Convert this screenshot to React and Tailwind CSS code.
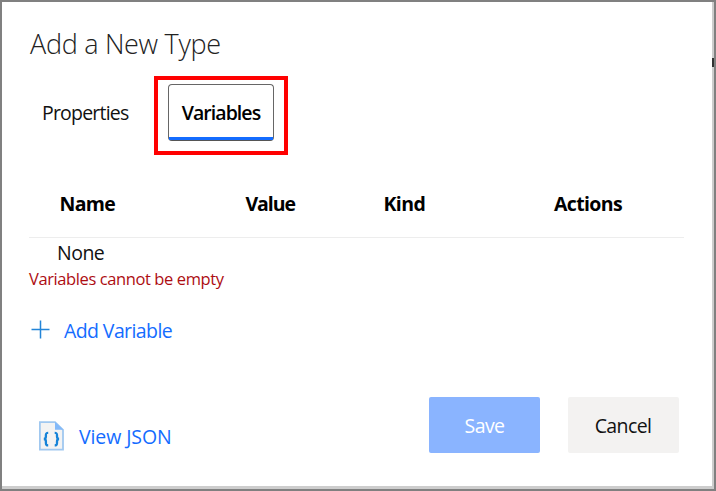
import React from "react";

const columns = [
  { label: "Name", cell: "w-[186px] pl-[30.5px] tracking-[-0.7px]" },
  { label: "Value", cell: "w-[138px] pl-[30.5px] tracking-[-1.05px]" },
  { label: "Kind", cell: "w-[170px] pl-[30.5px] tracking-[-0.6px]" },
  { label: "Actions", cell: "w-[160px] pl-[31px] tracking-[-0.65px]" },
];

function PlusIcon() {
  return (
    <svg width="19" height="19" viewBox="0 0 19 19" fill="none" className="block">
      <path d="M9.5 0.5V18.5M0.5 9.5H18.5" stroke="#2385d8" strokeWidth="1.5" />
    </svg>
  );
}

function JsonFileIcon() {
  return (
    <svg width="26" height="30" viewBox="0 0 26 30" fill="none" className="block">
      <path d="M1.9 1.2H17L25 8.8V28.6H1.9Z" fill="#f3f3f3" stroke="#a0c8f0" strokeWidth="1.8" />
      <path d="M17 0.8V8.8H25.4Z" fill="#83b9f9" />
      <path
        d="M10.2 11.8C8 11.8 7.9 12.6 7.9 14.2V15.6C7.9 17.2 7.3 18 5.8 18C7.3 18 7.9 18.8 7.9 20.4V21.9C7.9 23.6 8 24.4 10.2 24.4"
        stroke="#1683d8"
        strokeWidth="2.3"
      />
      <path
        d="M16.7 11.8C18.9 11.8 19 12.6 19 14.2V15.6C19 17.2 19.6 18 21.1 18C19.6 18 19 18.8 19 20.4V21.9C19 23.6 18.9 24.4 16.7 24.4"
        stroke="#1683d8"
        strokeWidth="2.3"
      />
    </svg>
  );
}

export default function App() {
  return (
    <div className="relative h-[491px] w-[716px] overflow-hidden border-2 border-[#808080] bg-white font-['Open_Sans','Noto_Sans',sans-serif] text-[19.5px] leading-7 text-[#111]">
      <div className="flex h-full flex-col border-r-2 border-b-3 border-[#cdcdcd] pl-[27px]">
        <h1 className="mt-6 h-9 pl-px text-[27px] leading-9 font-light tracking-[-0.3px] whitespace-nowrap text-[#222]">
          Add a New Type
        </h1>

        <div className="mt-[14px] flex h-[79px]">
          <button className="mt-[23px] h-7 w-[125px] pl-[13px] text-left tracking-[-0.8px]">Properties</button>
          <div className="h-[79px] w-[134px] border-4 border-[#ff0000] px-[10px] pt-1">
            <button className="flex h-[57px] w-[106px] flex-col rounded-[4px] border border-[#666] border-b-[#555]">
              <span className="mt-[14px] block h-[38px] w-full text-center font-semibold tracking-[-0.95px] text-black">
                Variables
              </span>
              <span className="block h-[3px] w-full shrink-0 bg-[#146cff]" />
            </button>
          </div>
        </div>

        <div className="flex h-[83px] w-[655px] border-b border-[#ededed] pt-[35px] font-bold text-black">
          {columns.map((column) => (
            <div key={column.label} className={column.cell}>
              {column.label}
            </div>
          ))}
        </div>

        <div className="mt-px h-7 pl-[28px] tracking-[-0.5px]">None</div>
        <div className="h-6 text-[16.5px] leading-6 tracking-[-0.4px] text-[#ad0d12]">Variables cannot be empty</div>

        <button className="mt-[25px] flex h-7 items-start self-start pl-[2px] text-[#146cff]">
          <span className="mt-1">
            <PlusIcon />
          </span>
          <span className="mt-px ml-[14px] tracking-[-0.6px]">Add Variable</span>
        </button>

        <div className="mt-[53px] flex h-14">
          <button className="mt-[24px] flex h-[30px] w-[400px] items-start pl-[9px] text-[#146cff]">
            <JsonFileIcon />
            <span className="mt-[2px] ml-[15px] tracking-[-0.1px]">View JSON</span>
          </button>
          <button className="h-14 w-[111px] rounded-[2px] bg-[#8ab4ff] pt-[2px] tracking-[-0.6px] text-white">
            Save
          </button>
          <button className="ml-7 h-14 w-[111px] rounded-[2px] bg-[#f3f2f1] pt-[2px] pr-px tracking-[-0.6px]">
            Cancel
          </button>
        </div>
      </div>
      <span className="absolute top-[56px] right-0 h-[9px] w-[2px] bg-[#333]" />
    </div>
  );
}
